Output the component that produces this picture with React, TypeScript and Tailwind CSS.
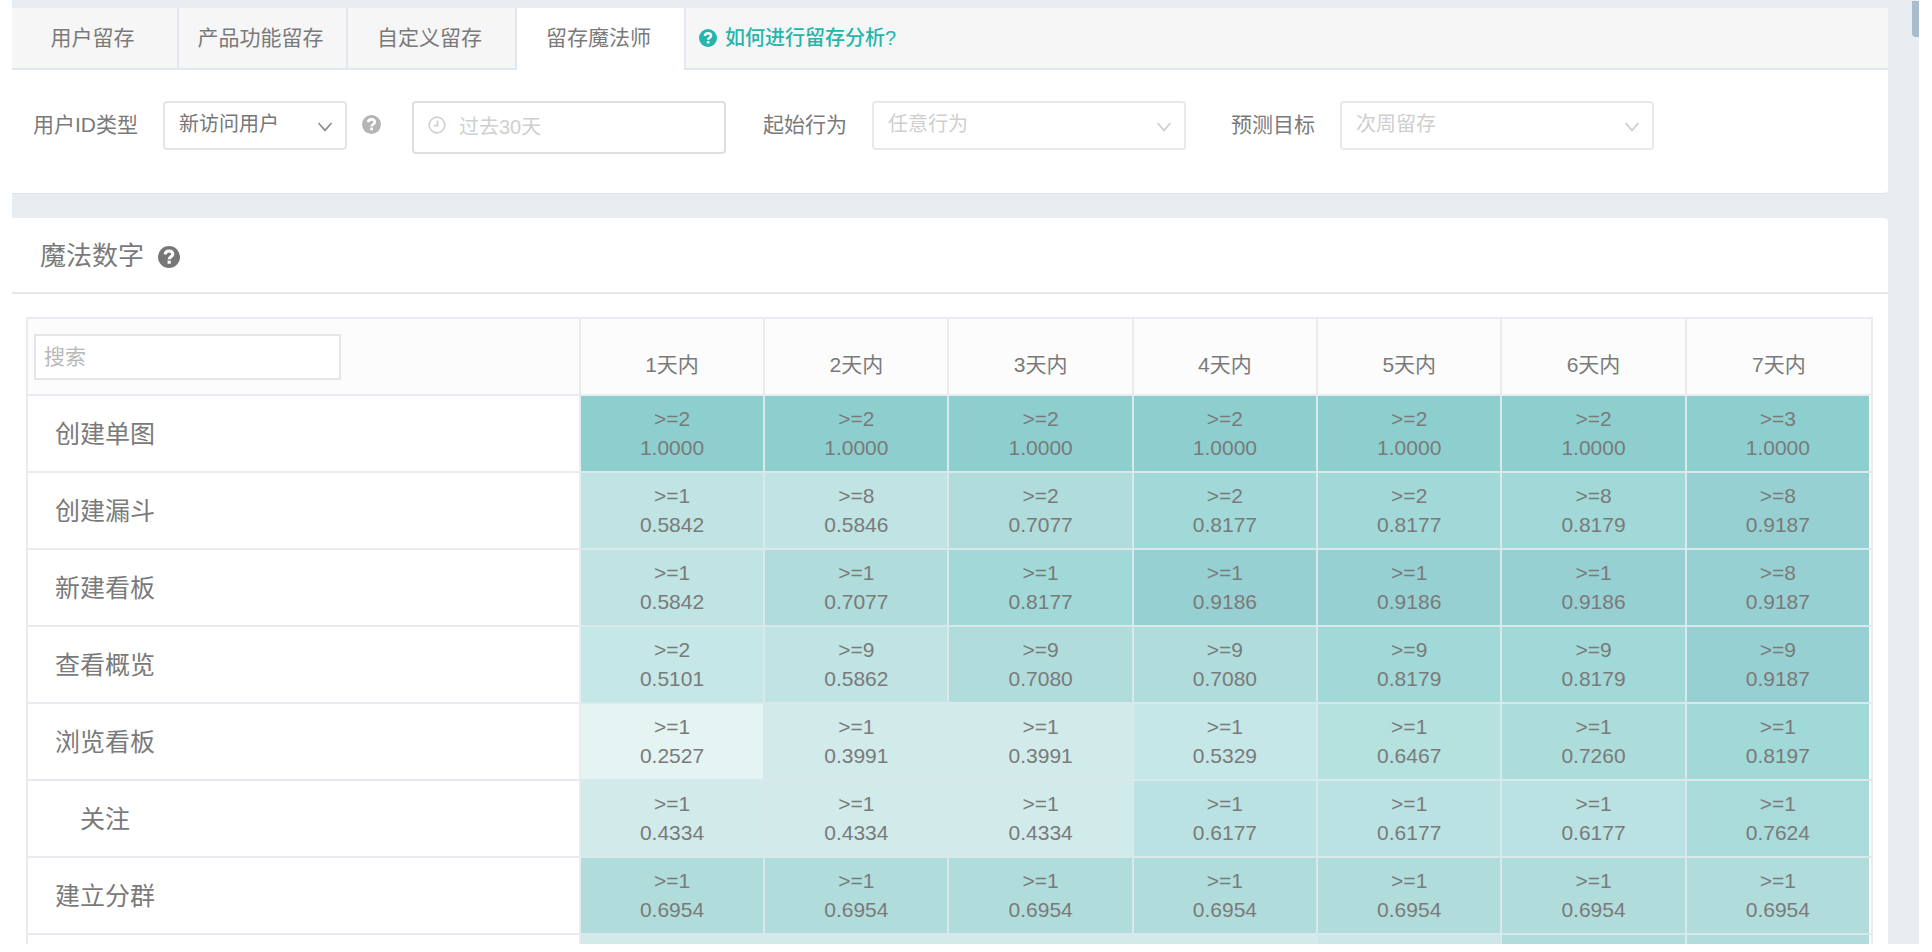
import { useState } from "react";

type Cell = [string, string];
type Row = { name: string; indent?: boolean; cells: Cell[] };

const tabs = ["用户留存", "产品功能留存", "自定义留存", "留存魔法师"];
const days = ["1天内", "2天内", "3天内", "4天内", "5天内", "6天内", "7天内"];

const rows: Row[] = [
  {
    name: "创建单图",
    cells: [[">=2", "1.0000"], [">=2", "1.0000"], [">=2", "1.0000"], [">=2", "1.0000"], [">=2", "1.0000"], [">=2", "1.0000"], [">=3", "1.0000"]],
  },
  {
    name: "创建漏斗",
    cells: [[">=1", "0.5842"], [">=8", "0.5846"], [">=2", "0.7077"], [">=2", "0.8177"], [">=2", "0.8177"], [">=8", "0.8179"], [">=8", "0.9187"]],
  },
  {
    name: "新建看板",
    cells: [[">=1", "0.5842"], [">=1", "0.7077"], [">=1", "0.8177"], [">=1", "0.9186"], [">=1", "0.9186"], [">=1", "0.9186"], [">=8", "0.9187"]],
  },
  {
    name: "查看概览",
    cells: [[">=2", "0.5101"], [">=9", "0.5862"], [">=9", "0.7080"], [">=9", "0.7080"], [">=9", "0.8179"], [">=9", "0.8179"], [">=9", "0.9187"]],
  },
  {
    name: "浏览看板",
    cells: [[">=1", "0.2527"], [">=1", "0.3991"], [">=1", "0.3991"], [">=1", "0.5329"], [">=1", "0.6467"], [">=1", "0.7260"], [">=1", "0.8197"]],
  },
  {
    name: "关注",
    indent: true,
    cells: [[">=1", "0.4334"], [">=1", "0.4334"], [">=1", "0.4334"], [">=1", "0.6177"], [">=1", "0.6177"], [">=1", "0.6177"], [">=1", "0.7624"]],
  },
  {
    name: "建立分群",
    cells: [[">=1", "0.6954"], [">=1", "0.6954"], [">=1", "0.6954"], [">=1", "0.6954"], [">=1", "0.6954"], [">=1", "0.6954"], [">=1", "0.6954"]],
  },
];

// top edge of the row that is cut off by the viewport
const nextRow = ["bg-[#d3eaea]", "bg-[#d3eaea]", "bg-[#d3eaea]", "bg-[#d3eaea]", "bg-[#cce7e8]", "bg-[#b0dddb]", "bg-[#b0dddb]"];

function heat(value: number) {
  if (value >= 1) return "bg-[#8dcfcf]";
  if (value >= 0.9) return "bg-[#97d0d2]";
  if (value >= 0.8) return "bg-[#a1d8d8]";
  if (value >= 0.75) return "bg-[#a9dbdb]";
  if (value >= 0.72) return "bg-[#acdddb]";
  if (value >= 0.69) return "bg-[#b0dddb]";
  if (value >= 0.64) return "bg-[#b5e1df]";
  if (value >= 0.6) return "bg-[#bbe2e2]";
  if (value >= 0.58) return "bg-[#c0e3e4]";
  if (value >= 0.5) return "bg-[#c6e7e7]";
  if (value >= 0.39) return "bg-[#d1ebeb]";
  return "bg-[#e4f4f3]";
}

function QuestionIcon({ className }: { className: string }) {
  return (
    <svg viewBox="0 0 20 20" className={className} aria-hidden="true">
      <circle cx="10" cy="10" r="10" fill="currentColor" />
      <path
        d="M6.5 7.6C6.7 5.6 8.1 4.6 10 4.6s3.4 1.1 3.4 2.9c0 2.3-3.2 2.2-3.2 4.5"
        fill="none"
        stroke="#fff"
        strokeWidth="2.8"
      />
      <rect x="8.7" y="13.3" width="2.9" height="2.8" fill="#fff" />
    </svg>
  );
}

function Chevron({ className }: { className: string }) {
  return (
    <svg viewBox="0 0 16 10" className={className} aria-hidden="true">
      <path d="M1.5 1 8 8.4 14.5 1" fill="none" stroke="currentColor" strokeWidth="1.7" />
    </svg>
  );
}

function Select({ id, value, width, muted }: { id: string; value: string; width: string; muted?: boolean }) {
  return (
    <div className={`relative ${width}`}>
      <select
        id={id}
        className={`block h-[49px] w-full appearance-none rounded-[4px] border-2 bg-white pb-[4px] pl-[14px] text-[20px] leading-[24px] ${
          muted ? "border-[#e9e9e9] text-[#cfcfcf]" : "border-[#e5e5e5] text-[#777]"
        }`}
      >
        <option>{value}</option>
      </select>
      <Chevron
        className={`pointer-events-none absolute top-[21px] right-[14px] h-[10px] w-[16px] ${
          muted ? "text-[#cfcfcf]" : "text-[#8f8f8f]"
        }`}
      />
    </div>
  );
}

export default function App() {
  const [active, setActive] = useState(3);
  const [query, setQuery] = useState("");

  const visible = rows.filter((row) => row.name.includes(query));

  return (
    <div className="h-screen overflow-hidden bg-white pr-[13px] pb-[8px] pl-[12px] font-['Liberation_Sans','Noto_Sans_CJK_SC',sans-serif] text-[#7a7a7a]">
      <div className="relative h-full overflow-hidden border-t border-[#ececec] bg-[#e8edf1] pt-[7px] pr-[31px]">
        <div className="absolute top-0 right-0 h-[36px] w-[7px] rounded-bl-[4px] bg-[#a9bccd]" />

        <section className="h-[186px] rounded-r-[4px] border-b border-[#e0e6ee] bg-white">
          <nav className="flex h-[62px] bg-[#f6f6f6]">
            {tabs.map((tab, i) => (
              <button
                key={tab}
                type="button"
                onClick={() => setActive(i)}
                className={`border-r-2 border-[#e2e8f0] pr-[4px] text-[21px] ${i === 0 ? "w-[167px]" : "w-[169px]"} ${
                  i === active ? "bg-white pb-[3px]" : "border-b-2 pb-[1px]"
                }`}
              >
                {tab}
              </button>
            ))}
            <a
              href="#"
              className="flex flex-1 items-center gap-[8px] border-b-2 border-[#e2e8f0] pl-[13px] text-[20px] font-medium text-[#24b5ad]"
            >
              <QuestionIcon className="h-[18px] w-[18px]" />
              如何进行留存分析?
            </a>
          </nav>

          <div className="flex items-start pt-[31px] pl-[21px] text-[21px] leading-[48px]">
            <label htmlFor="id-type">用户ID类型</label>
            <div className="ml-[25px] flex items-start">
              <Select id="id-type" value="新访问用户" width="w-[184px]" />
              <QuestionIcon className="mt-[14px] ml-[15px] h-[19px] w-[19px] text-[#b5b5b5]" />
            </div>
            <div className="relative ml-[31px]">
              <svg viewBox="0 0 18 18" className="absolute top-[15px] left-[16px] h-[18px] w-[18px] text-[#d0d0d0]" aria-hidden="true">
                <circle cx="9" cy="9" r="7.8" fill="none" stroke="currentColor" strokeWidth="1.7" />
                <path d="M9.6 4.5v5.2H6" fill="none" stroke="currentColor" strokeWidth="1.7" />
              </svg>
              <input
                type="text"
                aria-label="时间范围"
                placeholder="过去30天"
                className="block h-[53px] w-[314px] rounded-[4px] border-2 border-[#dfdfdf] bg-white pl-[45px] text-[20px] placeholder:text-[#cfcfcf]"
              />
            </div>
            <label htmlFor="start-action" className="ml-[37px]">
              起始行为
            </label>
            <div className="ml-[25px]">
              <Select id="start-action" value="任意行为" width="w-[314px]" muted />
            </div>
            <label htmlFor="target" className="ml-[45px]">
              预测目标
            </label>
            <div className="ml-[25px]">
              <Select id="target" value="次周留存" width="w-[314px]" muted />
            </div>
          </div>
        </section>

        <section className="mt-[24px] rounded-tr-[4px] bg-white">
          <header className="flex h-[76px] items-center gap-[14px] border-b-2 border-[#e4e8ec] pt-[3px] pl-[28px]">
            <h2 className="text-[26px]">魔法数字</h2>
            <QuestionIcon className="h-[22px] w-[22px] text-[#777]" />
          </header>

          <div className="pt-[23px] pr-[15px] pl-[14px]">
            <table className="w-full table-fixed border-separate border-spacing-0 border-t-2 border-r-2 border-l-2 border-[#e8ebef]">
              <thead className="bg-[#fcfcfd]">
                <tr className="h-[77px]">
                  <th className="w-[30%] border-r-2 border-b-2 border-[#e8ebef] p-0 pl-[6px] text-left font-normal">
                    <input
                      type="search"
                      aria-label="搜索"
                      placeholder="搜索"
                      value={query}
                      onChange={(e) => setQuery(e.target.value)}
                      className="block h-[46px] w-[307px] border-2 border-[#e4e6e8] bg-white px-[8px] text-[21px] placeholder:text-[#b8b8b8]"
                    />
                  </th>
                  {days.map((day) => (
                    <th
                      key={day}
                      className="border-r-2 border-b-2 border-[#e8ebef] p-0 pt-[16px] text-[21px] font-normal last:border-r-0"
                    >
                      {day}
                    </th>
                  ))}
                </tr>
              </thead>
              <tbody>
                {visible.map((row) => (
                  <tr key={row.name} className="h-[77px]">
                    <th
                      className={`border-r-2 border-b-2 border-[#e8ebef] p-0 pt-[2px] text-left text-[25px] font-normal ${
                        row.indent ? "pl-[52px]" : "pl-[27px]"
                      }`}
                    >
                      {row.name}
                    </th>
                    {row.cells.map(([times, rate], i) => (
                      <td
                        key={i}
                        className="border-r-2 border-b-2 border-[#d9e8ea] p-0 text-center text-[21px] leading-[29px] last:border-r-0 last:pr-[2px]"
                      >
                        <div className={`flex h-[75px] flex-col justify-center pb-px ${heat(Number(rate))}`}>
                          <span>{times}</span>
                          <span>{rate}</span>
                        </div>
                      </td>
                    ))}
                  </tr>
                ))}
                <tr className="h-[77px]">
                  <th className="border-r-2 border-[#e8ebef] p-0" />
                  {nextRow.map((color, i) => (
                    <td key={i} className="border-r-2 border-[#d9e8ea] p-0 last:border-r-0 last:pr-[2px]">
                      <div className={`h-[77px] ${color}`} />
                    </td>
                  ))}
                </tr>
              </tbody>
            </table>
          </div>
        </section>
      </div>
    </div>
  );
}
